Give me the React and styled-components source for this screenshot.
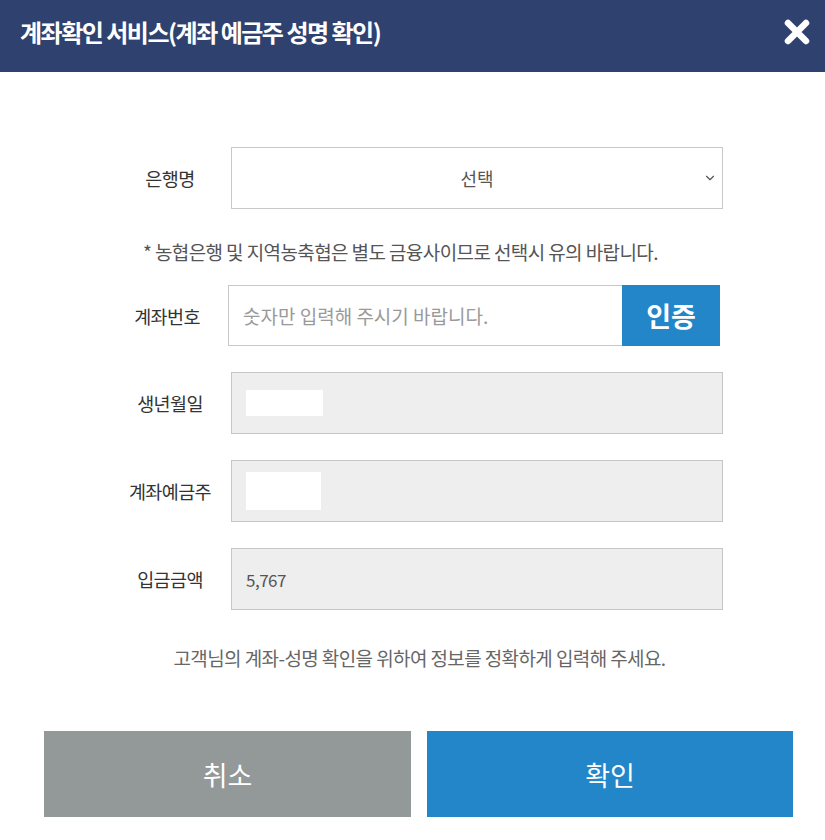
import React, { useState } from "react";
import styled, { createGlobalStyle } from "styled-components";
import { ChevronDown } from "lucide-react";

const GlobalStyle = createGlobalStyle`
	* {
		box-sizing: border-box;
	}
	body {
		margin: 0;
		background: #ffffff;
		font-family: "Noto Sans CJK KR", "Noto Sans", sans-serif;
	}
`;

function CloseIcon() {
	return (
		<svg width="28" height="28" viewBox="0 0 28 28">
			<path
				d="M5 5 L23 23 M23 5 L5 23"
				stroke="#ffffff"
				strokeWidth="6.5"
				strokeLinecap="round"
				fill="none"
			/>
		</svg>
	);
}

function App() {
	const [bank, setBank] = useState("");
	const [account, setAccount] = useState("");

	return (
		<Wrapper>
			<GlobalStyle />
			<Header>
				<h1>계좌확인 서비스(계좌 예금주 성명 확인)</h1>
				<CloseButton type="button" aria-label="닫기">
					<CloseIcon />
				</CloseButton>
			</Header>

			<Form onSubmit={(e) => e.preventDefault()}>
				<Row>
					<Label>은행명</Label>
					<SelectBox>
						<select value={bank} onChange={(e) => setBank(e.target.value)}>
							<option value="">선택</option>
							<option value="nh">농협은행</option>
							<option value="kb">국민은행</option>
						</select>
						<ChevronDown className="arrow" size={14} strokeWidth={2} />
					</SelectBox>
				</Row>

				<Note>* 농협은행 및 지역농축협은 별도 금융사이므로 선택시 유의 바랍니다.</Note>

				<Row gap={20} shift={-3}>
					<Label>계좌번호</Label>
					<AccountBox>
						<input
							type="text"
							placeholder="숫자만 입력해 주시기 바랍니다."
							value={account}
							onChange={(e) => setAccount(e.target.value)}
						/>
						<VerifyButton type="button">인증</VerifyButton>
					</AccountBox>
				</Row>

				<Row gap={26}>
					<Label>생년월일</Label>
					<ReadOnly>
						<Mask w={77} h={26} />
					</ReadOnly>
				</Row>

				<Row gap={26}>
					<Label>계좌예금주</Label>
					<ReadOnly>
						<Mask w={75} h={38} />
					</ReadOnly>
				</Row>

				<Row gap={26}>
					<Label>입금금액</Label>
					<ReadOnly>5,767</ReadOnly>
				</Row>
			</Form>

			<Info>고객님의 계좌-성명 확인을 위하여 정보를 정확하게 입력해 주세요.</Info>

			<Actions>
				<ActionButton type="button" variant="cancel">
					취소
				</ActionButton>
				<ActionButton type="button">확인</ActionButton>
			</Actions>
		</Wrapper>
	);
}

const Wrapper = styled.div`
	width: 825px;
	min-height: 840px;
	background: #ffffff;
`;

const Header = styled.header`
	height: 72px;
	background: #2f426f;
	display: flex;
	align-items: center;
	justify-content: space-between;
	padding: 0 14px 8px 20px;

	h1 {
		margin: 0;
		color: #ffffff;
		font-size: 24px;
		font-weight: 700;
		letter-spacing: -1.5px;
		line-height: 1;
	}
`;

const CloseButton = styled.button`
	background: transparent;
	border: 0;
	padding: 0;
	display: flex;
	cursor: pointer;
`;

const Form = styled.form`
	width: 613px;
	margin: 75px 0 0 110px;
`;

const Row = styled.div`
	display: grid;
	grid-template-columns: 121px 492px;
	align-items: center;
	margin-top: ${(p) => (p.gap ? `${p.gap}px` : "0")};
	margin-left: ${(p) => (p.shift ? `${p.shift}px` : "0")};
`;

const Label = styled.label`
	text-align: center;
	font-size: 18.5px;
	letter-spacing: -0.6px;
	color: #333333;
	padding-right: 1px;
`;

const SelectBox = styled.div`
	position: relative;
	height: 62px;

	select {
		width: 100%;
		height: 100%;
		appearance: none;
		border: 1px solid #c8c8c8;
		border-radius: 0;
		background: #ffffff;
		font-family: inherit;
		font-size: 18px;
		color: #555555;
		text-align: center;
		text-align-last: center;
		outline: 0;
	}

	.arrow {
		position: absolute;
		right: 6px;
		top: 24px;
		color: #555555;
		pointer-events: none;
	}
`;

const Note = styled.p`
	margin: 30px 0 0;
	padding-left: 33px;
	font-size: 19px;
	line-height: 26px;
	letter-spacing: -0.6px;
	color: #555555;
	white-space: nowrap;
`;

const AccountBox = styled.div`
	display: flex;
	height: 61px;

	input {
		flex: 1;
		min-width: 0;
		border: 1px solid #c8c8c8;
		border-right: 0;
		padding: 0 14px;
		font-family: inherit;
		font-size: 19px;
		color: #333333;
		outline: 0;

		&::placeholder {
			color: #9a9a9a;
		}
	}
`;

const VerifyButton = styled.button`
	width: 98px;
	border: 0;
	background: #2386c8;
	color: #ffffff;
	font-family: inherit;
	font-size: 27px;
	font-weight: 700;
	cursor: pointer;
`;

const ReadOnly = styled.div`
	height: 62px;
	display: flex;
	align-items: center;
	padding-left: 14px;
	background: #eeeeee;
	border: 1px solid #c6c6c6;
	font-size: 17px;
	letter-spacing: -0.5px;
	color: #555555;
`;

const Mask = styled.span`
	display: block;
	width: ${(p) => p.w}px;
	height: ${(p) => p.h}px;
	background: #ffffff;
`;

const Info = styled.p`
	margin: 35px 0 0;
	padding-left: 14px;
	text-align: center;
	font-size: 19px;
	line-height: 26px;
	letter-spacing: -0.6px;
	color: #666666;
	white-space: nowrap;
`;

const Actions = styled.div`
	display: grid;
	grid-template-columns: 367px 366px;
	gap: 16px;
	padding: 0 0 0 44px;
	margin-top: 60px;
`;

const ActionButton = styled.button`
	height: 86px;
	border: 0;
	background: ${(p) => (p.variant === "cancel" ? "#939899" : "#2386c8")};
	color: #ffffff;
	font-family: inherit;
	font-size: 27px;
	cursor: pointer;
`;

export default App;
